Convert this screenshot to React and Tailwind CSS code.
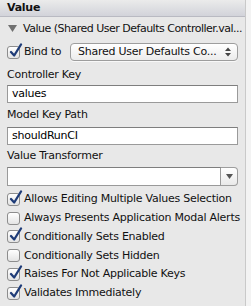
import React from 'react';

// IB bindings inspector: "Value" section
const options = [
  { label: 'Allows Editing Multiple Values Selection', checked: true },
  { label: 'Always Presents Application Modal Alerts', checked: false },
  { label: 'Conditionally Sets Enabled', checked: true },
  { label: 'Conditionally Sets Hidden', checked: false },
  { label: 'Raises For Not Applicable Keys', checked: true },
  { label: 'Validates Immediately', checked: true },
];

const CheckBox = ({ checked }) => (
  <div className="relative w-[13px] h-[13px] shrink-0 rounded-[3px] border border-[#8d8d8d] bg-gradient-to-b from-white to-[#e4e4e4]">
    {checked && (
      <svg className="absolute -top-[4px] left-[1px]" width="14" height="15" viewBox="0 0 14 15">
        <path d="M2 9 L5.2 12.5 L12 1.5" fill="none" stroke="#1f3c78" strokeWidth="2.3" strokeLinecap="round" strokeLinejoin="round" />
      </svg>
    )}
  </div>
);

const TextField = ({ value }) => (
  <div className="h-[18px] bg-white border border-[#9a9a9a] border-t-[#7e7e7e] px-[4px] flex items-center text-[11px] text-black">
    {value}
  </div>
);

export default function App() {
  return (
    <div
      className="w-[251px] h-[306px] flex bg-[#e8e8e8] overflow-hidden text-[#111] tracking-[-0.25px]"
      style={{ fontFamily: '"DejaVu Sans", "Liberation Sans", sans-serif' }}
    >
      <div className="flex-1 min-w-0 flex flex-col">
        {/* section header */}
        <div className="h-[17px] shrink-0 flex items-center px-[7px] bg-gradient-to-b from-[#ebebeb] to-[#d2d3da] border-b border-[#b9bac2] text-[11px] font-bold">
          Value
        </div>

        <div className="px-[7px] flex flex-col">
          <div className="h-[24px] flex items-center gap-[6px] text-[11px] whitespace-nowrap tracking-[-0.5px]">
            <svg width="9" height="8" viewBox="0 0 9 8" className="ml-[1px] shrink-0">
              <path d="M0 0 H9 L4.5 7 Z" fill="#707070" />
            </svg>
            <span>Value (Shared User Defaults Controller.val...</span>
          </div>

          <div className="h-[22px] flex items-center">
            <CheckBox checked />
            <span className="ml-[4px] text-[11px] w-[46px]">Bind to</span>
            <div className="flex-1 h-[18px] flex items-center justify-between rounded-[4px] border border-[#9d9d9d] bg-gradient-to-b from-white to-[#ececec] pl-[7px] pr-[6px] text-[11px] shadow-[0_1px_0_rgba(255,255,255,0.7)]">
              <span>Shared User Defaults Co...</span>
              <svg width="6" height="10" viewBox="0 0 6 10">
                <path d="M0 4 L3 0.5 L6 4 Z M0 6 L3 9.5 L6 6 Z" fill="#444" />
              </svg>
            </div>
          </div>

          <div className="h-[20px] mt-[2px] flex items-center text-[11px]">Controller Key</div>
          <TextField value="values" />

          <div className="h-[24px] flex items-center text-[11px]">Model Key Path</div>
          <TextField value="shouldRunCI" />

          <div className="h-[22px] flex items-center text-[11px]">Value Transformer</div>
          <div className="h-[19px] flex">
            <div className="flex-1 bg-white border border-[#9a9a9a] border-t-[#7e7e7e]"></div>
            <div className="w-[17px] flex items-center justify-center rounded-r-[4px] border border-l-0 border-[#9d9d9d] bg-gradient-to-b from-white to-[#e9e9e9]">
              <svg width="7" height="5" viewBox="0 0 7 5">
                <path d="M0 0 H7 L3.5 5 Z" fill="#555" />
              </svg>
            </div>
          </div>

          <div className="mt-[4px] flex flex-col">
            {options.map((opt) => (
              <div key={opt.label} className="h-[18.8px] flex items-center whitespace-nowrap">
                <CheckBox checked={opt.checked} />
                <span className="ml-[4px] text-[11px]">{opt.label}</span>
              </div>
            ))}
          </div>
        </div>
      </div>

      {/* scroller edge */}
      <div className="w-[6px] shrink-0 border-l border-[#c9c9c9] bg-[#f3f3f3]"></div>
    </div>
  );
}
